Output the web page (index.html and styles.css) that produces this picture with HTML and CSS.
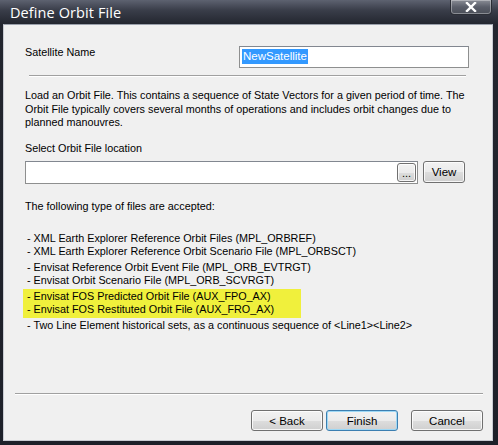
FILE: index.html
```html
<!DOCTYPE html>
<html>
<head>
<meta charset="utf-8">
<link rel="stylesheet" href="styles.css">
</head>
<body>
<div class="window">
  <div class="titlebar">
    <span class="title">Define Orbit File</span>
    <div class="close">
      <svg width="16" height="10" viewBox="0 0 16 10"><path d="M4 1 L12 9 M12 1 L4 9" stroke="#fff" stroke-width="2.4" stroke-linecap="square"/></svg>
    </div>
  </div>
  <div class="client">
    <div class="name-row">
      <span class="lbl">Satellite Name</span>
      <div class="input name-input"><span class="sel">NewSatellite</span></div>
    </div>
    <div class="sep top-sep"></div>
    <p class="desc">Load an Orbit File. This contains a sequence of State Vectors for a given period of time. The Orbit File typically covers several months of operations and includes orbit changes due to planned manouvres.</p>
    <p class="lbl loc-lbl">Select Orbit File location</p>
    <div class="file-row">
      <div class="input file-input"><div class="btn browse">...</div></div>
      <div class="btn view">View</div>
    </div>
    <p class="accepted">The following type of files are accepted:</p>
    <div class="list">
      <div class="group g1">
        <div>- XML Earth Explorer Reference Orbit Files (MPL_ORBREF)</div>
        <div>- XML Earth Explorer Reference Orbit Scenario File (MPL_ORBSCT)</div>
      </div>
      <div class="group g2">
        <div>- Envisat Reference Orbit Event File (MPL_ORB_EVTRGT)</div>
        <div>- Envisat Orbit Scenario File (MPL_ORB_SCVRGT)</div>
      </div>
      <div class="group g3">
        <div>- Envisat FOS Predicted Orbit File (AUX_FPO_AX)</div>
        <div>- Envisat FOS Restituted Orbit File (AUX_FRO_AX)</div>
      </div>
      <div class="group g4">
        <div>- Two Line Element historical sets, as a continuous sequence of &lt;Line1&gt;&lt;Line2&gt;</div>
      </div>
    </div>
    <div class="spacer"></div>
    <div class="sep bottom-sep"></div>
    <div class="buttons">
      <div class="btn wide">&lt; Back</div>
      <div class="btn wide default">Finish</div>
      <div class="btn wide cancel">Cancel</div>
    </div>
  </div>
</div>
</body>
</html>
```
FILE: styles.css
```css
html, body {
  margin: 0;
  padding: 0;
  background: #1d2029;
}
.window {
  width: 498px;
  height: 445px;
  box-sizing: border-box;
  display: flex;
  flex-direction: column;
  background: linear-gradient(#5d6270 0, #3a3e4a 10px, #23262f 24px, #1d2029 100%);
  padding: 0 5px 4px 3px;
  font-family: "Liberation Sans", Arial, sans-serif;
  font-size: 10.8px;
  color: #000;
}
.titlebar {
  height: 24px;
  flex: none;
  display: flex;
  align-items: flex-start;
  justify-content: space-between;
}
.title {
  color: #fff;
  font-family: "Open Sans", "Liberation Sans", sans-serif;
  font-size: 14.5px;
  line-height: 14px;
  margin-top: 6px;
  margin-left: 7px;
  letter-spacing: 0.1px;
}
.close {
  width: 42px;
  height: 15px;
  box-sizing: border-box;
  border: 1px solid #2b2e36;
  border-top: none;
  border-radius: 0 0 4px 4px;
  background: linear-gradient(#8a8d96, #5a5e69 50%, #4a4e58);
  box-shadow: inset 0 0 0 1px rgba(255,255,255,0.35);
  display: flex;
  align-items: center;
  justify-content: center;
  margin-right: 1px;
  margin-left: auto;
}
.client {
  flex: 1;
  background: #f0f0f0;
  border: 1px solid #c8cbd2;
  border-top-color: #9aa0ab;
  display: flex;
  flex-direction: column;
  padding: 0 23px 0 21px;
}
.name-row {
  display: flex;
  justify-content: space-between;
  align-items: flex-start;
  margin-top: 20px;
}
.lbl {
  line-height: 14px;
  margin: 0;
}
.input {
  background: #fff;
  border: 1px solid #8e8f8f;
  border-top-color: #828790;
  box-sizing: border-box;
}
.name-input {
  width: 230px;
  height: 22px;
  margin-top: 1px;
  padding: 2px 0 0 2px;
}
.sel {
  background: #3399ff;
  color: #fff;
  font-size: 11.5px;
  line-height: 15px;
  display: inline-block;
  padding: 0 1px;
}
.sep {
  height: 1px;
  background: #a0a0a0;
  border-bottom: 1px solid #fff;
}
.top-sep {
  margin: 7px 3px 0 4px;
}
.desc {
  margin: 12px 0 0 0;
  line-height: 13.5px;
}
.loc-lbl {
  margin-top: 11px;
}
.file-row {
  display: flex;
  align-items: center;
  margin-top: 6px;
  height: 23px;
}
.file-input {
  width: 393px;
  height: 23px;
  display: flex;
  justify-content: flex-end;
  align-items: center;
  padding-right: 1px;
}
.btn {
  box-sizing: border-box;
  border: 1px solid #707070;
  border-radius: 3px;
  background: linear-gradient(#f2f2f2 0, #ebebeb 50%, #dddddd 51%, #cfcfcf 100%);
  box-shadow: inset 0 0 0 1px rgba(255,255,255,0.8);
  display: flex;
  align-items: center;
  justify-content: center;
  color: #000;
  font-size: 11.5px;
}
.browse {
  width: 19px;
  height: 19px;
  font-size: 11px;
  line-height: 19px;
  padding-top: 3px;
}
.view {
  width: 42px;
  height: 22px;
  margin-left: 5px;
}
.accepted {
  margin: 15px 0 0 0;
  line-height: 14px;
}
.list {
  margin-top: 19px;
  line-height: 13.5px;
}
.group > div {
  padding-left: 2px;
}
.g2 { margin-top: 2px; }
.g3 {
  margin-top: 1px;
  background: #f0f03c;
  width: 276px;
  padding: 1px 0 1px 2px;
  margin-left: -2px;
}
.g4 { margin-top: 1px; }
.spacer { flex: 1; }
.bottom-sep {
  margin: 0 -14px 0 -10px;
}
.buttons {
  display: flex;
  justify-content: flex-end;
  margin-top: 15px;
  margin-bottom: 9px;
  margin-right: -14px;
}
.wide {
  width: 72px;
  height: 21px;
}
.wide + .wide { margin-left: 3px; }
.default {
  border-color: #3c7fb1;
  box-shadow: inset 0 0 0 1px #9ed8f5;
}
.wide.cancel { margin-left: 13px; }
```
